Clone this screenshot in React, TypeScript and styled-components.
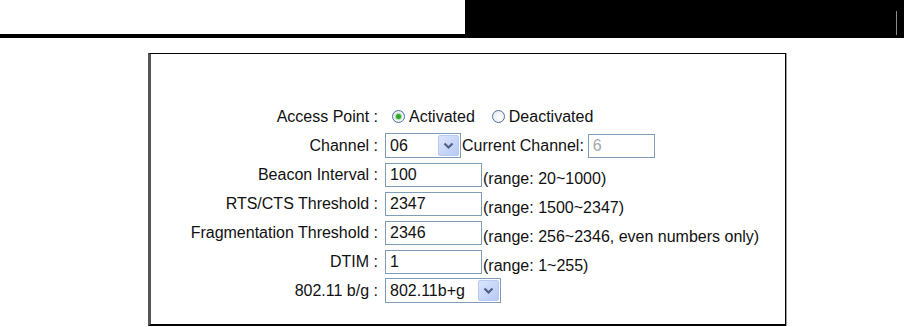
import React from "react";
import styled, { createGlobalStyle } from "styled-components";

const Global = createGlobalStyle`
  html, body { margin: 0; padding: 0; background: #fff; }
  body { font-family: "Liberation Sans", Arial, sans-serif; font-size: 16px; color: #111; }
`;

const Header = styled.header`
  display: flex;
  height: 38px;
`;

const HeaderLeft = styled.div`
  width: 465px;
  box-sizing: border-box;
  border-bottom: 4px solid #000;
`;

const HeaderRight = styled.div`
  flex: 1;
  background: #000;
  display: flex;
  justify-content: flex-end;
  padding: 11px 7px 3px 0;
`;

const HeaderRule = styled.span`
  width: 1px;
  background: #8a8a8a;
`;

const Frame = styled.section`
  margin: 15px 0 0 148px;
  width: 638px;
  height: 273px;
  box-sizing: border-box;
  border-left: 3px solid #555;
  border-top: 1px solid #000;
  border-right: 1px solid #000;
  border-bottom: 2px solid #000;
  box-shadow: 1px 0 0 #a0a0a0;
  padding-top: 48px;
`;

const Form = styled.div`
  display: grid;
  grid-template-columns: 227px 1fr;
  grid-auto-rows: 29px;
  column-gap: 7px;
`;

const Label = styled.div`
  text-align: right;
  align-self: center;
  white-space: nowrap;
`;

const Cell = styled.div`
  display: flex;
  align-items: center;
  white-space: nowrap;
`;

const RadioWrap = styled.label`
  display: inline-flex;
  align-items: center;
  margin-right: 10px;
`;

const RadioDot = styled.span<{ $on?: boolean }>`
  width: 13px;
  height: 13px;
  box-sizing: border-box;
  border-radius: 50%;
  border: 1px solid #4f6f9f;
  background: radial-gradient(circle at 60% 60%, #ffffff 0%, #e2e4e8 100%);
  margin: 0 4px 0 7px;
  display: inline-flex;
  align-items: center;
  justify-content: center;
  &::after {
    content: "";
    width: 5px;
    height: 5px;
    border-radius: 50%;
    background: ${(p) => (p.$on ? "#2ea52e" : "transparent")};
    box-shadow: ${(p) => (p.$on ? "0 0 1px 1px #a6dca6" : "none")};
  }
`;

const SelectBox = styled.div<{ $w: number }>`
  width: ${(p) => p.$w}px;
  height: 25px;
  box-sizing: border-box;
  border: 1px solid #7f9db9;
  background: #fff;
  display: flex;
  align-items: center;
  padding: 1px 1px 1px 4px;
`;

const SelectValue = styled.span`
  flex: 1;
`;

const DropBtn = styled.span`
  width: 21px;
  height: 21px;
  box-sizing: border-box;
  border: 1px solid #b9c9ef;
  border-radius: 2px;
  background: linear-gradient(135deg, #dbe5fc 0%, #b7c9f5 100%);
  display: flex;
  align-items: center;
  justify-content: center;
`;

const TextBox = styled.div<{ $w: number; $disabled?: boolean }>`
  width: ${(p) => p.$w}px;
  height: 24px;
  box-sizing: border-box;
  border: 1px solid #7f9db9;
  background: #fff;
  padding: 0 4px;
  display: flex;
  align-items: center;
  color: ${(p) => (p.$disabled ? "#a8a8a8" : "#111")};
`;

const Note = styled.span`
  margin-top: 9px;
  margin-left: 1px;
`;

const Inline = styled.span`
  margin: 0 4px 0 1px;
`;

const Chevron = () => (
  <svg width="11" height="8" viewBox="0 0 11 8">
    <path d="M1.5 1.5 L5.5 5.5 L9.5 1.5" fill="none" stroke="#4d6185" strokeWidth="2.2" />
  </svg>
);

const Select = ({ w, value }: { w: number; value: string }) => (
  <SelectBox $w={w}>
    <SelectValue>{value}</SelectValue>
    <DropBtn>
      <Chevron />
    </DropBtn>
  </SelectBox>
);

const rows: { label: string; value: string; note: string }[] = [
  { label: "Beacon Interval :", value: "100", note: "(range: 20~1000)" },
  { label: "RTS/CTS Threshold :", value: "2347", note: "(range: 1500~2347)" },
  { label: "Fragmentation Threshold :", value: "2346", note: "(range: 256~2346, even numbers only)" },
  { label: "DTIM :", value: "1", note: "(range: 1~255)" },
];

export default function App() {
  return (
    <>
      <Global />
      <Header>
        <HeaderLeft />
        <HeaderRight>
          <HeaderRule />
        </HeaderRight>
      </Header>
      <Frame>
        <Form>
          <Label>Access Point :</Label>
          <Cell>
            <RadioWrap>
              <RadioDot $on />
              Activated
            </RadioWrap>
            <RadioWrap>
              <RadioDot />
              Deactivated
            </RadioWrap>
          </Cell>
          <Label>Channel :</Label>
          <Cell>
            <Select w={76} value="06" />
            <Inline>Current Channel:</Inline>
            <TextBox $w={67} $disabled>6</TextBox>
          </Cell>
          {rows.map((r) => (
            <React.Fragment key={r.label}>
              <Label>{r.label}</Label>
              <Cell>
                <TextBox $w={97}>{r.value}</TextBox>
                <Note>{r.note}</Note>
              </Cell>
            </React.Fragment>
          ))}
          <Label>802.11 b/g :</Label>
          <Cell>
            <Select w={116} value="802.11b+g" />
          </Cell>
        </Form>
      </Frame>
    </>
  );
}
